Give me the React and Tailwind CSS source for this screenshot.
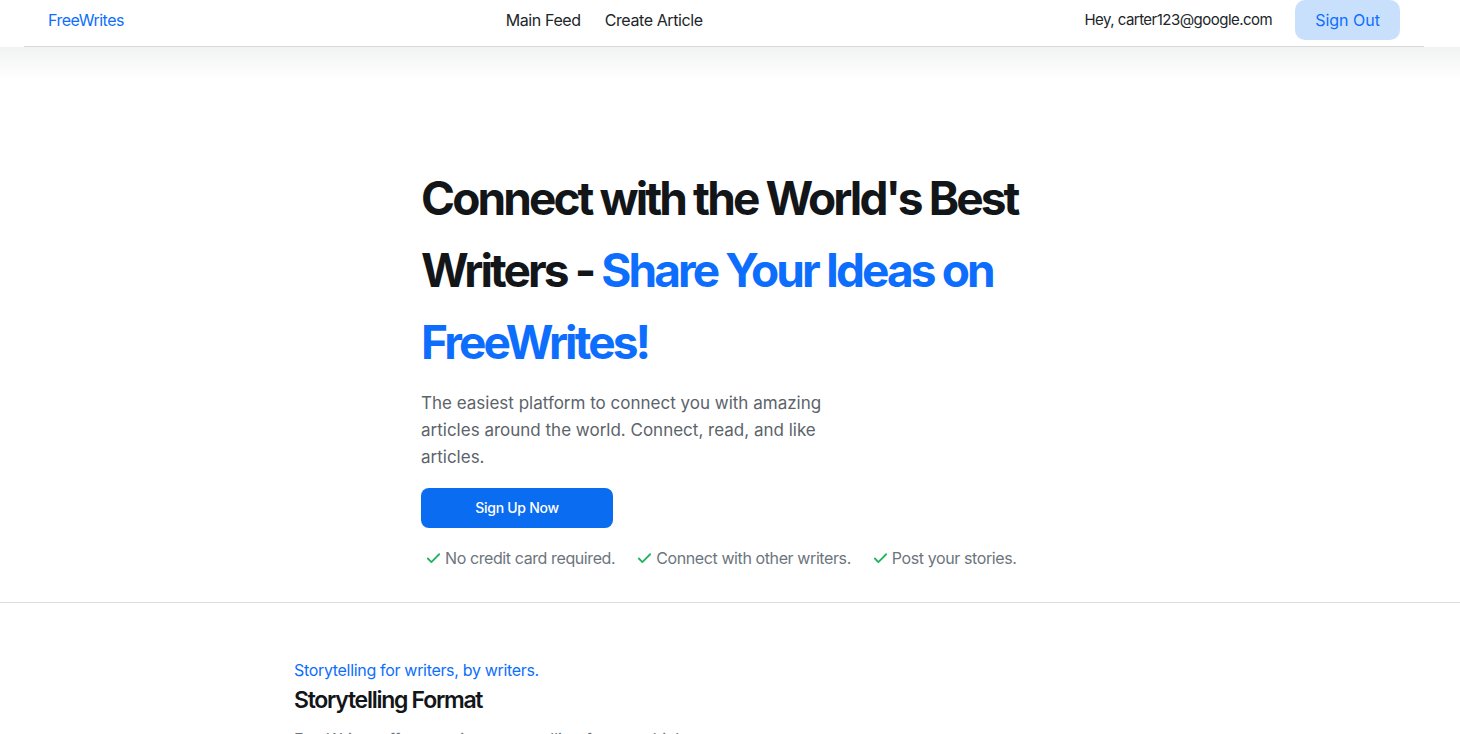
import React from 'react';
import { Check } from 'lucide-react';

export default function App() {
  const perks = ['No credit card required.', 'Connect with other writers.', 'Post your stories.'];

  return (
    <div className="min-h-screen bg-white text-[#212529]" style={{ fontFamily: 'Inter, "Liberation Sans", sans-serif' }}>
      {/* nav */}
      <header className="w-[1400px] ml-6 border-b border-[#d9d9d9] pb-1.5">
        <div className="flex items-center h-10 px-6">
          <a className="text-base tracking-[-0.03em] text-[#0d6efd]">FreeWrites</a>
          <nav className="flex-1 flex justify-center text-base tracking-[-0.025em] text-[#212529]">
            <a className="px-3">Main Feed</a>
            <a className="px-3">Create Article</a>
          </nav>
          <div className="flex items-center gap-[23px]">
            <span className="text-[15px] text-[#212529] tracking-[-0.035em]">Hey, carter123@google.com</span>
            <button className="h-10 px-5 rounded-[10px] bg-[#c9e0fd] text-base text-[#0d6efd]">Sign Out</button>
          </div>
        </div>
      </header>
      <div className="h-[33px] bg-gradient-to-b from-[#f1f2f2] to-white"></div>

      {/* hero */}
      <section className="pt-[82px] pb-8 border-b border-[#dcdcdc]">
        <div className="w-[618px] mx-auto">
          <h1 className="text-[46px] leading-[72px] font-bold tracking-[-0.063em] text-[#131619]">
            Connect with the World's Best Writers - <span className="text-[#0d6efd]">Share Your Ideas on FreeWrites!</span>
          </h1>
          <p className="mt-3 w-[420px] text-[17px] leading-[27px] text-[#5c636a]">
            The easiest platform to connect you with amazing articles around the world. Connect, read, and like articles.
          </p>
          <button className="mt-[17px] w-[192px] h-10 rounded-lg bg-[#0a6cf0] text-sm font-medium tracking-[-0.02em] text-white">
            Sign Up Now
          </button>
          <ul className="mt-[18px] flex gap-[21px] pl-1 text-base leading-6 tracking-[-0.025em] text-[#6c757d] whitespace-nowrap">
            {perks.map((p) => (
              <li key={p} className="flex items-center gap-[3px]">
                <Check className="w-[17px] h-[17px] text-[#22b35e]" strokeWidth={2.5} />
                <span>{p}</span>
              </li>
            ))}
          </ul>
        </div>
      </section>

      {/* features */}
      <section className="pt-[55px] pb-16">
        <div className="w-[872px] mx-auto">
          <p className="text-base leading-6 tracking-[-0.02em] text-[#0d6efd]">Storytelling for writers, by writers.</p>
          <h2 className="mt-1 text-[23px] leading-[29px] font-semibold tracking-[-0.055em] text-[#131619]">Storytelling Format</h2>
          <p className="mt-3 text-base leading-6 text-[#6c757d] w-[420px]">
            FreeWrites offers a unique storytelling format which lets writers share long-form stories with readers everywhere.
          </p>
        </div>
      </section>
    </div>
  );
}
